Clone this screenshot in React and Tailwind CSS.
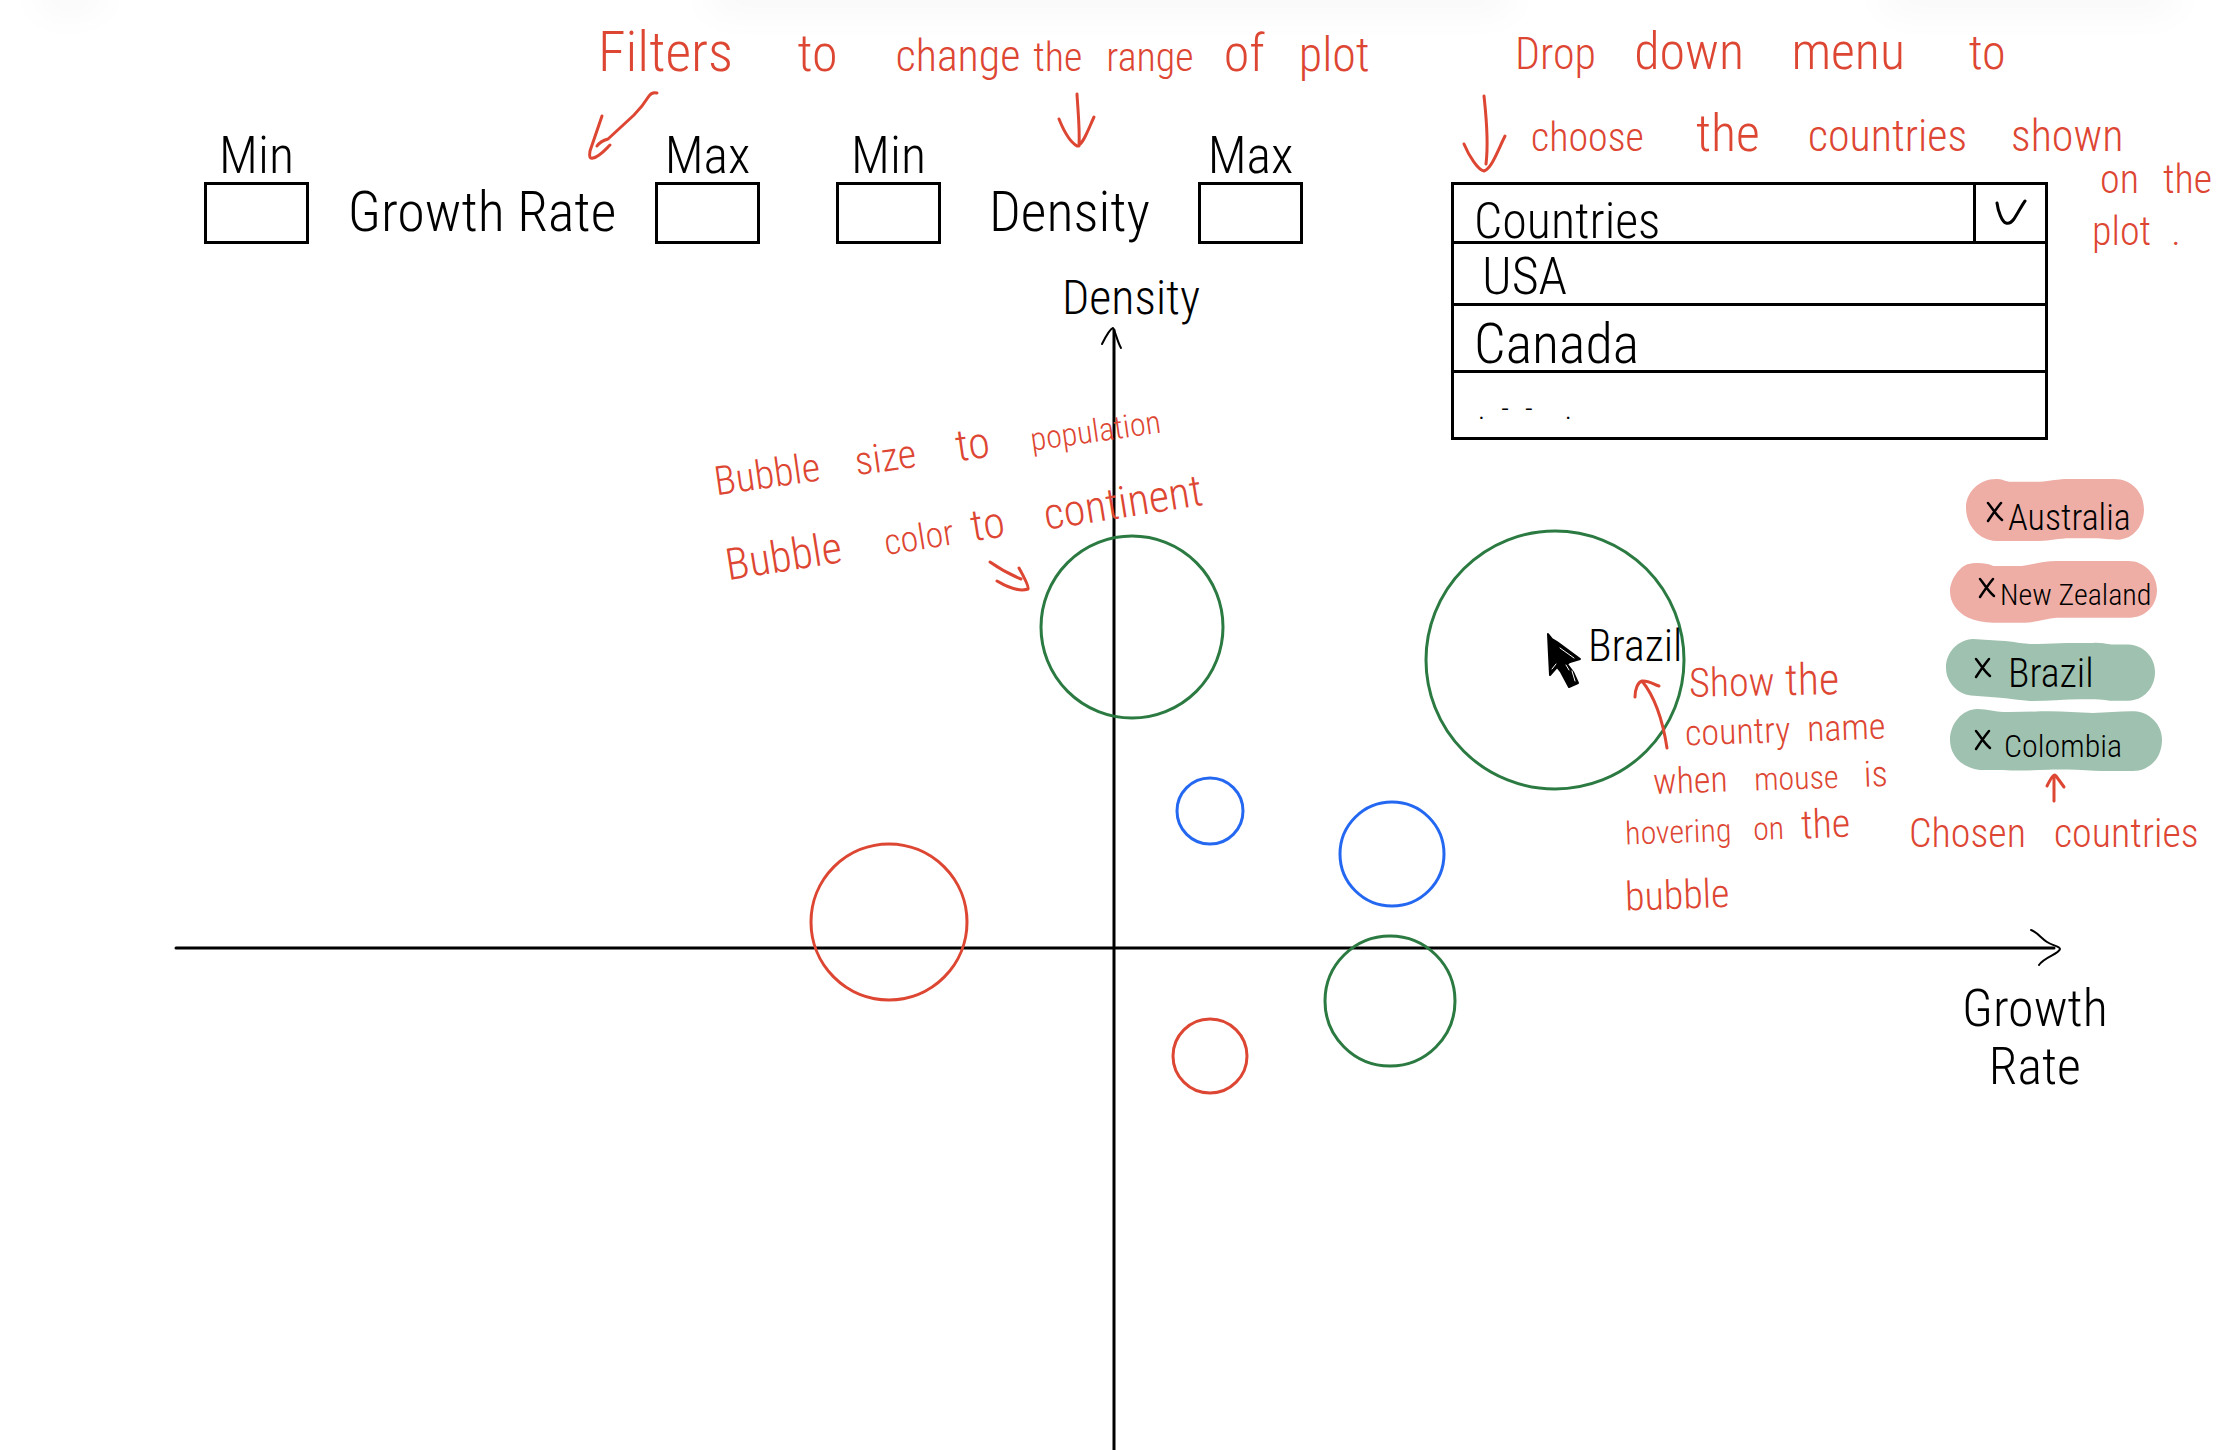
const INK = "#dd4632";

function Words({ items, className }) {
  return (
    <p className={`grid items-baseline whitespace-nowrap ${className}`}>
      {items.map(([word, size], i) => (
        <span key={i} className={`${size} min-w-0`}>
          {word}
        </span>
      ))}
    </p>
  );
}

function RangeFilter({ name, children }) {
  return (
    <fieldset className="flex items-end justify-between">
      <Bound label="Min" name={name} />
      <span className="text-[56px] leading-[64px]">{children}</span>
      <Bound label="Max" name={name} />
    </fieldset>
  );
}

function Bound({ label, name }) {
  return (
    <label className="flex w-[105px] flex-col items-center text-[52px] leading-[52px]">
      {label}
      <input
        type="text"
        aria-label={`${label} ${name}`}
        className="h-[62px] w-full border-3 border-black bg-white px-2 text-3xl outline-none"
      />
    </label>
  );
}

function CountryMenu() {
  return (
    <div className="w-full">
      <button
        type="button"
        aria-haspopup="listbox"
        aria-expanded="true"
        className="flex h-[62px] w-full items-stretch border-3 border-black bg-white text-left"
      >
        <span className="flex-1 pl-5 pt-2 text-[50px] leading-[56px]">Countries</span>
        <span className="flex w-[72px] items-center justify-center border-l-3 border-black">
          <svg width="32" height="28" viewBox="0 0 32 28" fill="none" stroke="#000" strokeWidth="3" strokeLinecap="round" strokeLinejoin="round" aria-hidden="true">
            <path d="M2 4C3 12 7 23 11 24C14 25 16 24 19 20C23 14 27 6 30 2" />
          </svg>
        </span>
      </button>
      <ul role="listbox" aria-label="Countries" className="border-x-3 border-black">
        <li role="option" aria-selected="false" className="h-[62px] border-b-3 border-black pl-7 text-[52px] leading-[66px]">
          USA
        </li>
        <li role="option" aria-selected="false" className="flex h-[67px] items-center border-b-3 border-black pl-5 pt-3 text-[56px] leading-[56px]">
          Canada
        </li>
        <li role="option" aria-selected="false" className="flex h-[67px] items-center gap-4 border-b-3 border-black pl-6 pt-2 text-3xl">
          <span>.</span>
          <span>-</span>
          <span>-</span>
          <span className="ml-4">.</span>
        </li>
      </ul>
    </div>
  );
}

const bubbles = [
  { x: 1132, y: 627, r: 91, color: "#2b7a41" },
  { x: 1555, y: 660, r: 129, color: "#2b7a41" },
  { x: 1390, y: 1001, r: 65, color: "#2b7a41" },
  { x: 1210, y: 811, r: 33, color: "#2468f2" },
  { x: 1392, y: 854, r: 52, color: "#2468f2" },
  { x: 889, y: 922, r: 78, color: INK },
  { x: 1210, y: 1056, r: 37, color: INK },
];

const arrows = [
  "M657 93C653 92 651 93 649 96C644 104 640 109 634 115L608 139C601 141 599 143 597 146M602 116L590 151C589 157 590 159 593 158C599 157 604 151 610 145",
  "M1077 94C1078 112 1080 130 1079 146M1059 119C1063 129 1070 142 1077 146C1083 145 1088 130 1094 117",
  "M1484 96C1486 115 1489 140 1486 164M1464 144C1469 156 1478 170 1484 171C1492 168 1498 150 1505 136",
  "M990 562C1000 569 1011 575 1021 579M1019 568C1024 577 1029 587 1028 589C1020 592 1007 587 997 581",
  "M1667 748C1663 722 1655 697 1642 681M1635 697C1635 689 1638 682 1642 681C1648 680 1653 684 1659 686",
  "M2054 801V778M2047 786C2051 778 2054 773 2056 776L2064 787",
];

function Plot() {
  return (
    <svg className="absolute inset-0 size-full" fill="none" strokeLinecap="round" strokeLinejoin="round" role="img" aria-label="Density against growth rate">
      <g stroke="#000" strokeWidth="3">
        <path d="M176 948H2054" />
        <path d="M1114 330V4000" />
        <path d="M2031 930C2037 932 2041 938 2047 942C2053 946 2060 946 2060 949C2059 954 2044 957 2039 965" strokeWidth="2" />
        <path d="M1102 344C1105 338 1110 329 1113 328C1116 333 1117 341 1121 348" strokeWidth="2" />
      </g>
      {bubbles.map((b) => (
        <circle key={`${b.x}-${b.y}`} cx={b.x} cy={b.y} r={b.r} stroke={b.color} strokeWidth="3" />
      ))}
      <path
        d="M1548 634L1552 639L1557 642L1580 659L1570 662L1567 664L1573 672L1578 683L1569 687L1561 672L1557 667L1550 675L1549 655Z"
        fill="#000"
        stroke="#000"
        strokeWidth="2"
      />
      <path d="M1560 648L1574 658M1572 671L1575 681M1566 665L1569 670M1552 669L1556 664" stroke="#fff" strokeWidth="1" />
      <g stroke={INK} strokeWidth="3">
        {arrows.map((d) => (
          <path key={d} d={d} />
        ))}
      </g>
    </svg>
  );
}

const chips = [
  {
    name: "Australia",
    box: "ml-5 w-[178px] pl-5 pt-4 gap-1",
    text: "text-[36px]",
    fill: "#eeaea6",
    viewBox: "255 57 534 181",
    shape: "M345 57C362 57 370 62 384 65H475C510 63 530 57 565 57H700C750 57 789 95 789 146C789 190 760 233 710 234C685 234 670 230 640 230H570C530 230 510 238 475 238H345C295 235 255 195 255 140C255 95 295 57 345 57Z",
  },
  {
    name: "New Zealand",
    box: "ml-1 mt-5 w-[207px] pl-7 pt-1 gap-1",
    text: "text-[30px]",
    fill: "#eeaea6",
    viewBox: "210 298 621 190",
    shape: "M262 308C285 302 315 302 340 313H425C460 309 490 298 530 298H745C795 298 831 340 831 388C831 435 795 472 750 472H530C495 474 465 488 430 487H340C310 486 285 482 265 472C230 455 210 425 210 390C210 360 235 318 262 308Z",
  },
  {
    name: "Brazil",
    box: "mt-4 w-[209px] pl-7 pt-2 gap-4",
    text: "text-[40px]",
    fill: "#9fc1af",
    viewBox: "197 537 628 190",
    shape: "M278 537L360 542C400 544 430 552 460 552C500 553 530 549 560 549H640C660 548 675 552 695 554H745C790 556 825 592 825 638C825 688 790 725 745 726H690C660 721 630 721 600 722C550 723 500 727 450 727C420 725 390 719 360 717L272 710C230 705 197 668 197 625C197 575 235 539 278 537Z",
  },
  {
    name: "Colombia",
    box: "ml-1 mt-2 w-[212px] pl-6 pt-3 gap-3",
    text: "text-[32px]",
    fill: "#9fc1af",
    viewBox: "215 744 638 184",
    shape: "M298 744C330 745 350 752 375 753C420 754 470 751 515 751C560 751 600 755 645 756C690 755 730 750 770 751C815 753 853 790 853 835C853 890 815 928 765 928C730 929 690 928 650 927C600 924 550 922 510 924C460 926 420 928 375 925H305C255 920 215 885 215 835C215 790 250 744 298 744Z",
  },
];

function Chip({ chip }) {
  return (
    <button type="button" aria-label={`Remove ${chip.name}`} className={`relative flex h-[62px] items-center whitespace-nowrap ${chip.box}`}>
      <svg className="absolute inset-0 size-full" viewBox={chip.viewBox} preserveAspectRatio="none" aria-hidden="true">
        <path d={chip.shape} fill={chip.fill} />
      </svg>
      <svg className="relative -mt-3 shrink-0" width="18" height="22" viewBox="0 0 18 22" fill="none" stroke="#000" strokeWidth="2.5" strokeLinecap="round" aria-hidden="true">
        <path d="M2 2C7 8 10 14 16 19M15 2C10 8 6 14 2 20" />
      </svg>
      <span className={`relative ${chip.text}`}>{chip.name}</span>
    </button>
  );
}

export default function App() {
  return (
    <main className="relative min-h-screen w-full overflow-hidden bg-white font-['Roboto_Condensed',Roboto,sans-serif] font-light text-black">
      <div className="absolute inset-x-0 -top-2 grid h-2 grid-cols-[40fr_60fr_610fr_800fr_375fr_290fr_49fr]" aria-hidden="true">
        <div className="col-start-2 shadow-[0_0_40px_rgba(0,0,0,0.14)]" />
        <div className="col-start-4 shadow-[0_0_40px_rgba(0,0,0,0.14)]" />
        <div className="col-start-6 shadow-[0_0_40px_rgba(0,0,0,0.14)]" />
      </div>

      <Plot />

      <header className="relative grid grid-cols-[204fr_556fr_76fr_467fr_148fr_597fr_176fr] items-start pt-5">
        <div className="col-span-3 col-start-2">
          <Words
            className="-mr-16 ml-[394px] grid-cols-[199fr_98fr_137fr_73fr_117fr_75fr_68fr] leading-[64px] text-[#dd4632]"
            items={[
              ["Filters", "text-[56px]"],
              ["to", "text-[52px]"],
              ["change", "text-[44px]"],
              ["the", "text-[40px]"],
              ["range", "text-[40px]"],
              ["of", "text-[52px]"],
              ["plot", "text-[48px]"],
            ]}
          />
          <div className="mt-10 grid grid-cols-[556fr_467fr] gap-x-19">
            <RangeFilter name="growth rate">Growth Rate</RangeFilter>
            <RangeFilter name="density">Density</RangeFilter>
          </div>
        </div>

        <div className="col-span-2 col-start-6">
          <Words
            className="ml-16 grid-cols-[119fr_157fr_177fr_255fr] leading-[64px] text-[#dd4632]"
            items={[
              ["Drop", "text-[44px]"],
              ["down", "text-[52px]"],
              ["menu", "text-[52px]"],
              ["to", "text-[48px]"],
            ]}
          />
          <Words
            className="ml-20 mt-4 grid-cols-[165fr_112fr_203fr_213fr] leading-[64px] text-[#dd4632]"
            items={[
              ["choose", "text-[40px]"],
              ["the", "text-[52px]"],
              ["countries", "text-[44px]"],
              ["shown", "text-[44px]"],
            ]}
          />
          <div className="mt-3 grid grid-cols-[597fr_176fr] items-start">
            <CountryMenu />
            <div className="-mt-7 pl-11 text-[40px] leading-[52px] text-[#dd4632]">
              <p className="flex gap-6 pl-2 whitespace-nowrap">
                <span>on</span>
                <span>the</span>
              </p>
              <p className="flex gap-5">
                <span>plot</span>
                <span>.</span>
              </p>
            </div>
          </div>
        </div>
      </header>

      <p className="absolute left-[1062px] top-[270px] text-[48px] leading-[56px]">Density</p>
      <p className="absolute left-[1962px] top-[980px] text-center text-[52px] leading-[58px]">
        Growth
        <br />
        Rate
      </p>
      <p className="absolute left-[1588px] top-[622px] text-[44px] leading-[48px]">Brazil</p>

      <Words
        className="absolute left-[718px] top-[456px] origin-bottom-left -rotate-8 grid-cols-[142px_102px_75px_134px] leading-[48px] text-[#dd4632]"
        items={[
          ["Bubble", "text-[40px]"],
          ["size", "text-[40px]"],
          ["to", "text-[44px]"],
          ["population", "text-[32px]"],
        ]}
      />
      <Words
        className="absolute left-[730px] top-[541px] origin-bottom-left -rotate-9 grid-cols-[160px_88px_74px_160px] leading-[48px] text-[#dd4632]"
        items={[
          ["Bubble", "text-[44px]"],
          ["color", "text-[36px]"],
          ["to", "text-[44px]"],
          ["continent", "text-[44px]"],
        ]}
      />

      <div className="absolute left-[1625px] top-[656px] leading-[48px] text-[#dd4632]">
        <Words className="ml-16 -rotate-1 grid-cols-[96px_54px]" items={[["Show", "text-[40px]"], ["the", "text-[44px]"]]} />
        <Words className="ml-15 -rotate-2 grid-cols-[122px_81px]" items={[["country", "text-[36px]"], ["name", "text-[36px]"]]} />
        <Words className="ml-7 -rotate-2 grid-cols-[101px_110px_17px]" items={[["when", "text-[36px]"], ["mouse", "text-[32px]"], ["is", "text-[36px]"]]} />
        <Words className="-rotate-2 grid-cols-[128px_48px_44px]" items={[["hovering", "text-[32px]"], ["on", "text-[32px]"], ["the", "text-[40px]"]]} />
        <Words className="mt-4 -rotate-2 grid-cols-[101px]" items={[["bubble", "text-[40px]"]]} />
      </div>

      <div className="absolute left-[1946px] top-[479px] flex flex-col items-start">
        {chips.map((chip) => (
          <Chip key={chip.name} chip={chip} />
        ))}
      </div>
      <p className="absolute left-[1909px] top-[806px] flex gap-7 text-[40px] leading-[56px] text-[#dd4632]">
        <span>Chosen</span>
        <span>countries</span>
      </p>
    </main>
  );
}
